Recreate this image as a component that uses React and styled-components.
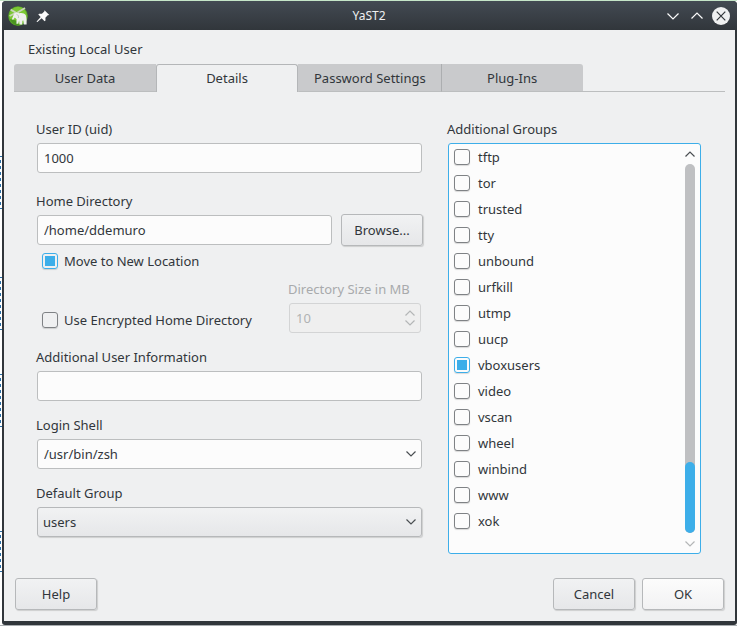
import React, { useState } from "react"
import styled, { createGlobalStyle, css } from "styled-components"

const GlobalStyle = createGlobalStyle`
	* {
		box-sizing: border-box;
	}
	body {
		margin: 0;
		background: #ffffff;
		color: #31363b;
		font: 13px/18px "Noto Sans", "Open Sans", sans-serif;
	}
	button, input, select {
		font: inherit;
		color: inherit;
		margin: 0;
	}
`

const Desktop = styled.div`
	display: flex;
	min-height: 100vh;
	border-top: 1px solid #c5e5c8;
	border-bottom: 1px solid #a9adb0;
`

const Behind = styled.div`
	width: 2px;
	flex: none;
	padding-top: 155px;
	display: flex;
	flex-direction: column;
	gap: 68px;
`

const Selection = styled.div`
	height: ${p => p.$height || 53}px;
	border: solid #2a6fa8;
	border-width: 1px 0;
	background: repeating-linear-gradient(#fff 0 3px, #2a6fa8 3px 6px) left / 1px
		100% no-repeat;
	margin-top: ${p => p.$shift || 0}px;
`

const Window = styled.main`
	flex: 1;
	min-width: 0;
	display: flex;
	flex-direction: column;
	background: #31363b;
	border-radius: 4px 4px 3px 3px;
	padding: 0 2px 4px;
`

const TitleBar = styled.header`
	height: 29px;
	flex: none;
	display: grid;
	grid-template-columns: 1fr auto 1fr;
	align-items: center;
	padding: 0 7px 0 6px;
	margin: 0 -2px;
	border-radius: 4px 4px 0 0;
	background: linear-gradient(#434a53, #31363b);
	color: #eff0f1;
`

const Title = styled.h1`
	margin: 0;
	font-size: 12px;
	font-weight: 400;
`

const TitleGroup = styled.div`
	display: flex;
	align-items: center;
	gap: 6px;
	justify-content: ${p => (p.$end ? "flex-end" : "flex-start")};
`

const TitleButton = styled.button`
	display: flex;
	width: 18px;
	height: 18px;
	padding: 0;
	border: 0;
	background: none;
`

const Body = styled.div`
	flex: 1;
	display: flex;
	flex-direction: column;
	background: #eff0f1;
	padding: 10px 10px 11px;
`

const Heading = styled.h2`
	margin: 0 0 6px 14px;
	font-size: 13px;
	font-weight: 400;
`

const TabBar = styled.div`
	display: flex;
	height: 28px;
	background: linear-gradient(#bcbebf, #bcbebf) bottom / 100% 1px no-repeat;
`

const Tab = styled.button`
	min-width: 142px;
	padding: 0 15px;
	border: 0;
	border-bottom: 1px solid #bcbebf;
	background: #c9cacc;

	&:first-child {
		border-top-left-radius: 3px;
	}
	&:last-child {
		border-top-right-radius: 3px;
	}
	& + & {
		border-left: 1px solid #acaeb0;
	}
	${p =>
		p.$active &&
		css`
			&& {
				padding-bottom: 2px;
				background: #eff0f1;
				border: solid #b4b6b8;
				border-width: 1px 1px 0;
				border-radius: 3px 3px 0 0;
			}
			&& + * {
				border-left-color: #c9cacc;
			}
		`}
`

const Panel = styled.section`
	flex: 1;
	display: grid;
	grid-template-columns: minmax(0, 386fr) minmax(0, 254fr);
	column-gap: 25px;
	padding: 28px 24px 24px 22px;
`

const Column = styled.div`
	display: flex;
	flex-direction: column;
`

const Field = styled.div`
	display: flex;
	flex-direction: column;
	gap: 5px;
	flex: ${p => (p.$grow ? 1 : "none")};
	margin-bottom: ${p => p.$after || 0}px;
	color: ${p => (p.$disabled ? "#a8aaac" : "inherit")};
`

const control = css`
	width: 100%;
	height: 30px;
	padding: 0 6px;
	border: 1px solid #bcbebf;
	border-radius: 3px;
	background: #fcfcfc;
	outline: none;
`

const raised = css`
	border: 1px solid #b6b8ba;
	border-radius: 3px;
	background: linear-gradient(#f1f2f3, #e6e7e9);
	box-shadow: 1px 1px 1px rgba(0, 0, 0, 0.14);
`

const Controls = styled.div`
	position: relative;
	display: flex;
	align-items: center;
	gap: 9px;
	margin-left: 1px;
`

const TextInput = styled.input`
	${control}
	min-width: 0;
	appearance: textfield;

	&::-webkit-inner-spin-button {
		display: none;
	}
	&:disabled {
		color: #b0b2b3;
		background: #efefef;
		border-color: #d3d4d5;
	}
`

const Select = styled.select`
	${control}
	appearance: none;
	${p => p.$raised && raised}
	${p => p.$raised && "padding-left: 5px;"}
`

const PushButton = styled.button`
	${raised}
	flex: none;
	width: 82px;
	height: 32px;
	padding: 0;
	${p => p.$primary && "background: linear-gradient(#fcfcfc, #f2f2f3);"}
`

const BrowseButton = styled(PushButton)`
	margin: -1px -1px -1px 0;
`

const Arrows = styled.div`
	position: absolute;
	right: 6px;
	top: 0;
	bottom: 0;
	display: flex;
	flex-direction: column;
	justify-content: center;
	pointer-events: none;
`

const CheckLabel = styled.label`
	display: flex;
	align-items: center;
	gap: 6px;
	height: ${p => p.$height || 18}px;
	padding-left: 6px;
`

const CheckBox = styled.input.attrs({ type: "checkbox" })`
	appearance: none;
	flex: none;
	width: 16px;
	height: 16px;
	border: 1px solid #7f8285;
	border-radius: 3px;
	background: ${p => (p.$light ? "#fcfcfc" : "transparent")};
	box-shadow: 0 1px 1px rgba(0, 0, 0, 0.14);

	&:checked {
		border-color: #3daee9;
		background: linear-gradient(#3daee9, #3daee9) content-box no-repeat;
		padding: 2px;
	}
`

const EncryptRow = styled.div`
	display: grid;
	grid-template-columns: minmax(0, 1fr) 133px;
	align-items: end;
	margin: 10px 1px 15px 0;
`

const EncryptCheck = styled(CheckLabel)`
	margin-bottom: 4px;
`

const GroupList = styled.div`
	flex: 1;
	display: flex;
	margin-left: 1px;
	padding-right: 5px;
	border: 1px solid #3daee9;
	border-radius: 3px;
	background: #fcfcfc;
`

const Items = styled.ul`
	flex: 1;
	margin: 0;
	padding: 0;
	list-style: none;
`

const ItemLabel = styled(CheckLabel)`
	gap: 8px;
	padding-left: 5px;
`

const ScrollBar = styled.div`
	display: flex;
	flex-direction: column;
	align-items: center;
	padding: 5px 0 4px;
`

const Track = styled.div`
	flex: 1;
	width: 10px;
	margin: 5px 0 6px;
	display: flex;
	flex-direction: column;
	justify-content: flex-end;
	border-radius: 5px;
	background: #bfc0c2;
`

const Thumb = styled.div`
	height: 71px;
	border-radius: 5px;
	background: #3daee9;
`

const Footer = styled.footer`
	display: flex;
	gap: 7px;
	padding: 0 1px;
`

const Spacer = styled.div`
	flex: 1;
`

const Chevron = ({ up, size = 10, color = "#4a4e52" }) => (
	<svg width={size} height={size} viewBox="0 0 10 10" fill="none">
		<path
			d={up ? "M0.5 7.5 5 3l4.5 4.5" : "M0.5 2.5 5 7l4.5-4.5"}
			stroke={color}
			strokeWidth="1.2"
		/>
	</svg>
)

const YastIcon = () => (
	<svg width="20" height="20" viewBox="0 0 20 20">
		<circle cx="10" cy="10" r="9.8" fill="#5aa828" />
		<circle cx="10" cy="9.6" r="8.8" fill="#7cc833" />
		<path d="M2 13c1.5 5 6 6.8 10 6.5l-4-5z" fill="#4a9420" />
		<path
			d="M2.6 3.6 9 7.2M17 2 9.5 6.6M1.6 10 7 7.2"
			stroke="#c8d4b8"
			strokeWidth="1.8"
		/>
		<path
			d="M6.2 7.6c1.6-1.4 3.6-1.2 5-.4 2.6-.6 5.4 0 6.6 2 1 2.2.9 6.2.8 9.4h-2.8l-.4-4-1 .2-.2 3.8h-2.6l-.5-4.2-.9 3.4H8.4l.2-4.6-1.8-1.6-1.6 2.2-1.4-.6z"
			fill="#eeefec"
		/>
		<path d="M8.6 8.4c1.4.4 2.2 1.6 1.8 3.6" stroke="#b4b8b0" strokeWidth="0.8" fill="none" />
	</svg>
)

const PinIcon = () => (
	<svg width="18" height="18" viewBox="0 0 18 18">
		<path
			d="m10.5 3.2 4.8 4.7-1.6.3-2.3 2.5.1 2.7-.9.8-3-3L3.4 15l-.7-.1.1-.7 3.9-4.1-2.4-2.5.8-.9 2.8.1 2.4-2.2z"
			fill="#fcfcfc"
		/>
	</svg>
)

const CloseIcon = () => (
	<svg width="18" height="18" viewBox="0 0 18 18">
		<circle cx="9" cy="9" r="9" fill="#eff0f1" />
		<path d="m4.7 4.7 8.6 8.6m0-8.6-8.6 8.6" stroke="#31363b" strokeWidth="1.2" />
	</svg>
)

const WindowChevron = ({ up }) => (
	<svg width="18" height="18" viewBox="0 0 18 18" fill="none">
		<path
			d={up ? "m3.5 11.5 5.5-5.5 5.5 5.5" : "m3.5 6.5 5.5 5.5 5.5-5.5"}
			stroke="#fcfcfc"
			strokeWidth="1.2"
		/>
	</svg>
)

const tabs = ["User Data", "Details", "Password Settings", "Plug-Ins"]

const groups = [
	"tftp",
	"tor",
	"trusted",
	"tty",
	"unbound",
	"urfkill",
	"utmp",
	"uucp",
	"vboxusers",
	"video",
	"vscan",
	"wheel",
	"winbind",
	"www",
	"xok"
]

export default function App() {
	const [tab, setTab] = useState("Details")
	const [member_of, setMemberOf] = useState(["vboxusers"])

	const toggle_group = name =>
		setMemberOf(
			member_of.includes(name)
				? member_of.filter(g => g != name)
				: [...member_of, name]
		)

	return (
		<Desktop>
			<GlobalStyle />
			<Behind>
				<Selection />
				<Selection />
				<Selection $shift={-24} />
				<Selection $shift={36} $height={41} />
			</Behind>
			<Window>
				<TitleBar>
					<TitleGroup>
						<YastIcon />
						<TitleButton aria-label="Keep on all desktops">
							<PinIcon />
						</TitleButton>
					</TitleGroup>
					<Title>YaST2</Title>
					<TitleGroup $end>
						<TitleButton aria-label="Minimize">
							<WindowChevron />
						</TitleButton>
						<TitleButton aria-label="Maximize">
							<WindowChevron up />
						</TitleButton>
						<TitleButton aria-label="Close">
							<CloseIcon />
						</TitleButton>
					</TitleGroup>
				</TitleBar>

				<Body>
					<Heading>Existing Local User</Heading>
					<TabBar role="tablist">
						{tabs.map(name => (
							<Tab
								key={name}
								role="tab"
								aria-selected={name == tab}
								$active={name == tab}
								onClick={() => setTab(name)}
							>
								{name}
							</Tab>
						))}
					</TabBar>

					<Panel>
						<Column>
							<Field $after={19}>
								<label htmlFor="uid">User ID (uid)</label>
								<Controls>
									<TextInput id="uid" defaultValue="1000" />
								</Controls>
							</Field>
							<Field $after={7}>
								<label htmlFor="home">Home Directory</label>
								<Controls>
									<TextInput id="home" defaultValue="/home/ddemuro" />
									<BrowseButton>Browse...</BrowseButton>
								</Controls>
							</Field>
							<CheckLabel>
								<CheckBox defaultChecked />
								Move to New Location
							</CheckLabel>
							<EncryptRow>
								<EncryptCheck>
									<CheckBox />
									Use Encrypted Home Directory
								</EncryptCheck>
								<Field $disabled>
									<label htmlFor="size">Directory Size in MB</label>
									<Controls>
										<TextInput id="size" type="number" defaultValue="10" disabled />
										<Arrows>
											<Chevron up color="#b4b6b7" />
											<Chevron color="#b4b6b7" />
										</Arrows>
									</Controls>
								</Field>
							</EncryptRow>
							<Field $after={15}>
								<label htmlFor="info">Additional User Information</label>
								<Controls>
									<TextInput id="info" />
								</Controls>
							</Field>
							<Field $after={15}>
								<label htmlFor="shell">Login Shell</label>
								<Controls>
									<Select id="shell">
										<option>/usr/bin/zsh</option>
									</Select>
									<Arrows>
										<Chevron />
									</Arrows>
								</Controls>
							</Field>
							<Field>
								<label htmlFor="group">Default Group</label>
								<Controls>
									<Select id="group" $raised>
										<option>users</option>
									</Select>
									<Arrows>
										<Chevron />
									</Arrows>
								</Controls>
							</Field>
						</Column>

						<Field $grow>
							<span id="groups-label">Additional Groups</span>
							<GroupList role="group" aria-labelledby="groups-label">
								<Items>
									{groups.map(name => (
										<li key={name}>
											<ItemLabel $height={26}>
												<CheckBox
													$light
													checked={member_of.includes(name)}
													onChange={() => toggle_group(name)}
												/>
												{name}
											</ItemLabel>
										</li>
									))}
								</Items>
								<ScrollBar>
									<Chevron up />
									<Track>
										<Thumb />
									</Track>
									<Chevron color="#b4b6b7" />
								</ScrollBar>
							</GroupList>
						</Field>
					</Panel>

					<Footer>
						<PushButton>Help</PushButton>
						<Spacer />
						<PushButton>Cancel</PushButton>
						<PushButton $primary>OK</PushButton>
					</Footer>
				</Body>
			</Window>
		</Desktop>
	)
}
